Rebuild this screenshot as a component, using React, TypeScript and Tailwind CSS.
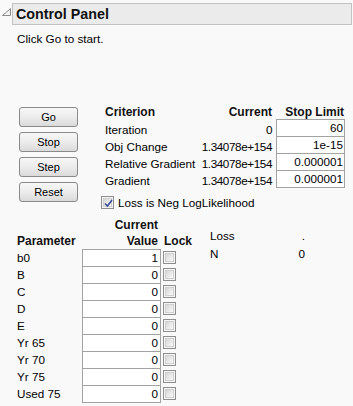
import React from "react";

const Box = ({ checked = false }: { checked?: boolean }) => (
  <div className="w-[13px] h-[13px] border border-[#8e8f8f] bg-[#f4f4f4] p-[1px]">
    <div className="relative w-full h-full border border-[#d0d0d0] bg-gradient-to-br from-[#d6d6d6] to-[#fafafa]">
      {checked && (
        <svg className="absolute left-0 top-0" width="9" height="9" viewBox="0 0 9 9">
          <path d="M1 4.5 L3.5 7 L8 1" fill="none" stroke="#3a4c96" strokeWidth="1.6" />
        </svg>
      )}
    </div>
  </div>
);

const Btn = ({ label }: { label: string }) => (
  <div className="w-[59px] h-[20px] border border-[#8a8a8a] rounded-[3px] bg-gradient-to-b from-[#f7f7f7] via-[#ececec] to-[#dadada] text-center text-[11px] leading-[18px] text-black">
    {label}
  </div>
);

const criteria = [
  ["Iteration", "0", "60"],
  ["Obj Change", "1.34078e+154", "1e-15"],
  ["Relative Gradient", "1.34078e+154", "0.000001"],
  ["Gradient", "1.34078e+154", "0.000001"],
];

const params = ["b0", "B", "C", "D", "E", "Yr 65", "Yr 70", "Yr 75", "Used 75"];

export default function App() {
  return (
    <div className="w-[353px] h-[406px] overflow-hidden bg-[#f9f9f9] text-black font-['Liberation_Sans',Arial,sans-serif] text-[11.7px]">
      {/* Header */}
      <div className="flex items-start pt-[3px] pl-[2px] pr-[1px]">
        <svg className="mt-[5px]" width="9" height="8" viewBox="0 0 9 8">
          <path d="M8.5 0.5 L8.5 7.5 L0.5 7.5 Z" fill="#f2f2f2" stroke="#8c8c8c" strokeWidth="1" />
        </svg>
        <div className="ml-[1px] flex-1 h-[22px] border border-[#c2c2c2] bg-[#ebebeb] pl-[3px] text-[14.3px] font-bold leading-[20px] text-[#111]">
          Control Panel
        </div>
      </div>

      <div className="mt-[6px] pl-[17px] leading-[16px]">Click Go to start.</div>

      {/* Main */}
      <div className="mt-[57px] flex items-start">
        <div className="w-[101px] pl-[19px] pt-[3px] flex flex-col gap-[5px]">
          <Btn label="Go" />
          <Btn label="Stop" />
          <Btn label="Step" />
          <Btn label="Reset" />
        </div>
        <div className="flex flex-col">
          <div className="pl-[4px] flex">
            <div className="w-[95px] flex flex-col">
              <div className="h-[15px] pt-[1px] leading-[15px] font-bold text-[12px] text-[#111]">Criterion</div>
              {criteria.map((c) => (
                <div key={c[0]} className="h-[17px] pt-[2px] leading-[17px] whitespace-nowrap">{c[0]}</div>
              ))}
            </div>
            <div className="w-[72px] flex flex-col text-right">
              <div className="h-[15px] pt-[1px] leading-[15px] font-bold text-[12px] text-[#111]">Current</div>
              {criteria.map((c) => (
                <div key={c[0]} className="h-[17px] pt-[2px] leading-[17px] whitespace-nowrap tracking-[-0.4px]">{c[1]}</div>
              ))}
            </div>
            <div className="ml-[4px] w-[69px] flex flex-col text-right">
              <div className="h-[15px] pt-[1px] pr-[1px] leading-[15px] font-bold text-[12px] text-[#111] whitespace-nowrap">Stop Limit</div>
              <div className="border-t border-[#a3a3a3]">
                {criteria.map((c) => (
                  <div key={c[0]} className="h-[17px] border-x border-b border-[#a3a3a3] bg-white pr-[1px] leading-[16px]">{c[2]}</div>
                ))}
              </div>
            </div>
          </div>
          <div className="mt-[8px] flex items-start gap-[4px]">
            <Box checked />
            <div className="h-[13px] leading-[13px] whitespace-nowrap">Loss is Neg LogLikelihood</div>
          </div>
        </div>
      </div>

      {/* Parameters */}
      <div className="mt-[8px] flex items-start">
        <div className="pl-[17px] w-[82px] flex flex-col">
          <div className="h-[17px]" />
          <div className="h-[15px] leading-[15px] font-bold text-[12px] text-[#111]">Parameter</div>
          <div className="pt-[1px]">
            {params.map((p) => (
              <div key={p} className="h-[17px] leading-[16px] whitespace-nowrap">{p}</div>
            ))}
          </div>
        </div>
        <div className="w-[79px] flex flex-col text-right">
          <div className="h-[17px] leading-[17px] pr-[3px] font-bold text-[12px] text-[#111]">Current</div>
          <div className="h-[15px] leading-[15px] pr-[3px] font-bold text-[12px] text-[#111]">Value</div>
          <div className="border-t border-[#a3a3a3]">
            {params.map((p) => (
              <div key={p} className="h-[17px] border-x border-b border-[#a3a3a3] bg-white pr-[2px] leading-[16px]">
                {p === "b0" ? "1" : "0"}
              </div>
            ))}
          </div>
        </div>
        <div className="ml-[2px] w-[28px] flex flex-col">
          <div className="h-[17px]" />
          <div className="h-[15px] leading-[15px] pl-[1px] font-bold text-[12px] text-[#111]">Lock</div>
          <div className="pt-[1px]">
            {params.map((p) => (
              <div key={p} className="h-[17px] pt-[1px]">
                <Box />
              </div>
            ))}
          </div>
        </div>
        <div className="ml-[19px] mt-[10px] w-[95px] flex flex-col">
          <div className="h-[18px] leading-[17px] flex justify-between">
            <span>Loss</span>
            <span>.</span>
          </div>
          <div className="h-[18px] leading-[17px] flex justify-between">
            <span>N</span>
            <span>0</span>
          </div>
        </div>
      </div>
    </div>
  );
}
